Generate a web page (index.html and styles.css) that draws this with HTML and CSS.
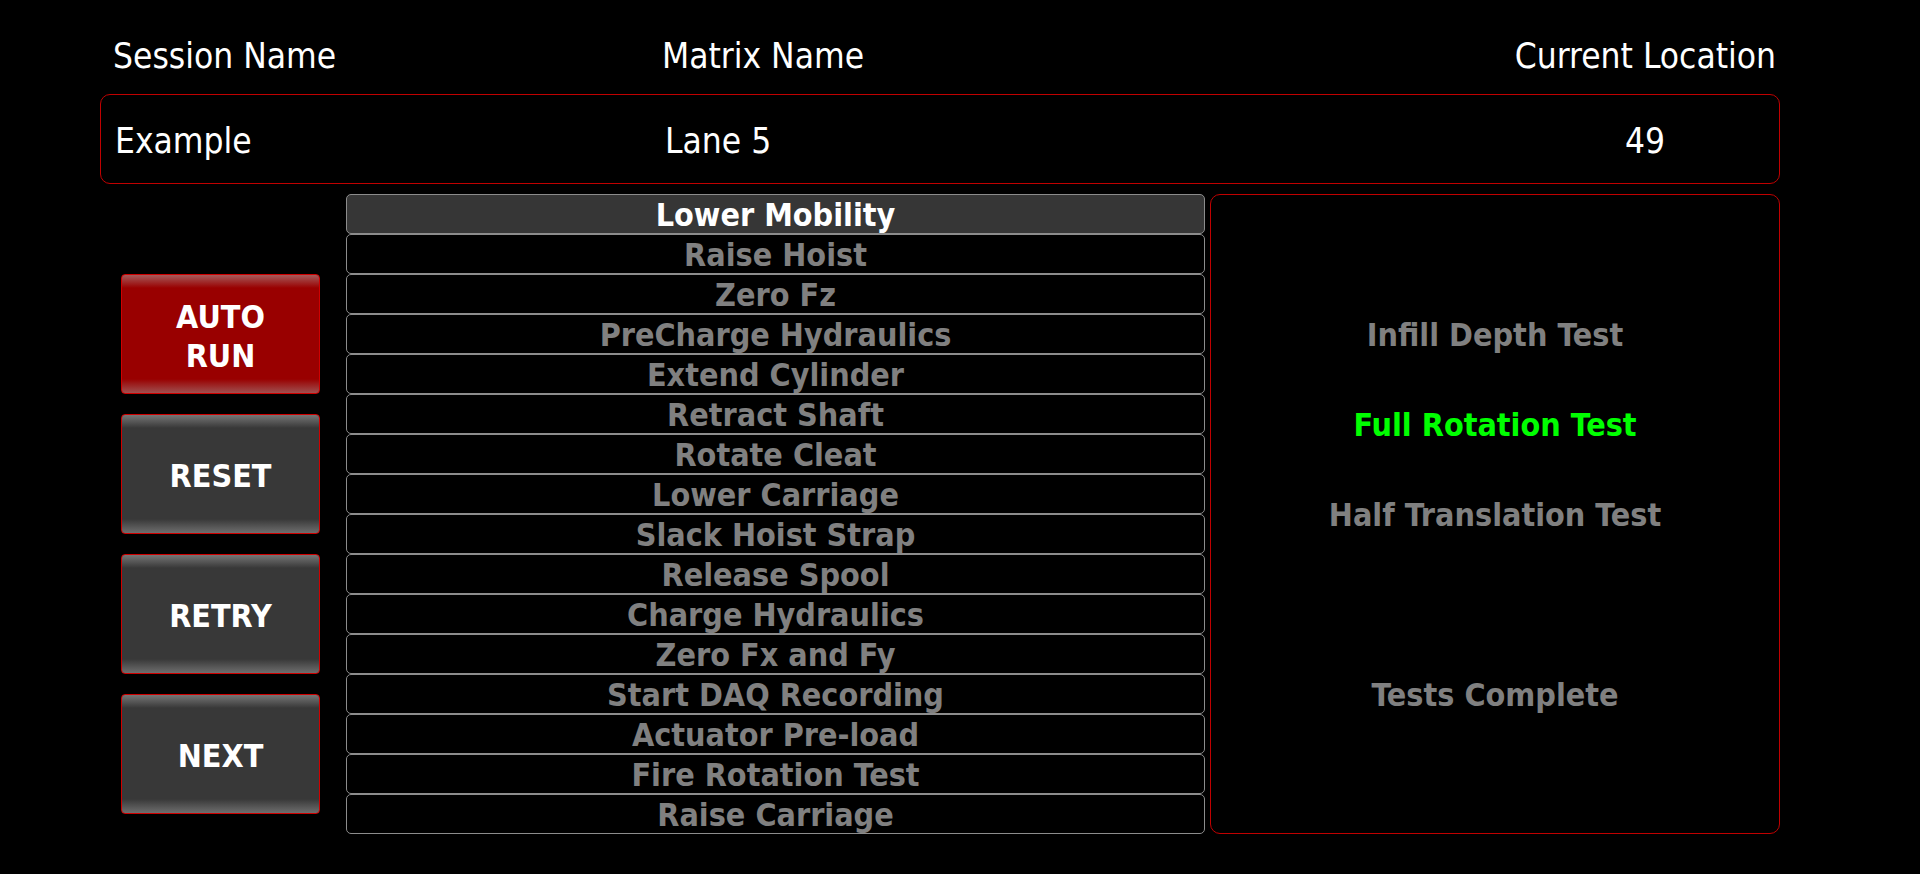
FILE: index.html
```html
<!DOCTYPE html>
<html>
<head>
<meta charset="utf-8">
<title>Test Sequence</title>
<link rel="stylesheet" href="styles.css">
</head>
<body>
<div class="app">
  <div class="head-labels">
    <div class="label">Session Name</div>
    <div class="label">Matrix Name</div>
    <div class="label right">Current Location</div>
  </div>
  <div class="info-box">
    <div class="value">Example</div>
    <div class="value">Lane 5</div>
    <div class="value center">49</div>
  </div>
  <div class="main">
    <div class="buttons">
      <div class="btn btn-red">AUTO<br>RUN</div>
      <div class="btn">RESET</div>
      <div class="btn">RETRY</div>
      <div class="btn">NEXT</div>
    </div>
    <div class="steps">
      <div class="step active">Lower Mobility</div>
      <div class="step">Raise Hoist</div>
      <div class="step">Zero Fz</div>
      <div class="step">PreCharge Hydraulics</div>
      <div class="step">Extend Cylinder</div>
      <div class="step">Retract Shaft</div>
      <div class="step">Rotate Cleat</div>
      <div class="step">Lower Carriage</div>
      <div class="step">Slack Hoist Strap</div>
      <div class="step">Release Spool</div>
      <div class="step">Charge Hydraulics</div>
      <div class="step">Zero Fx and Fy</div>
      <div class="step">Start DAQ Recording</div>
      <div class="step">Actuator Pre-load</div>
      <div class="step">Fire Rotation Test</div>
      <div class="step">Raise Carriage</div>
    </div>
    <div class="panel">
      <div class="slot">Infill Depth Test</div>
      <div class="slot current">Full Rotation Test</div>
      <div class="slot">Half Translation Test</div>
      <div class="slot"></div>
      <div class="slot">Tests Complete</div>
    </div>
  </div>
</div>
</body>
</html>
```
FILE: styles.css
```css
* {
  box-sizing: border-box;
  margin: 0;
  padding: 0;
}

html,
body {
  background: #000;
}

body {
  width: 1920px;
  height: 874px;
  overflow: hidden;
  font-family: "DejaVu Sans Condensed", "DejaVu Sans", sans-serif;
  font-stretch: condensed;
  color: #fff;
}

.app {
  margin-left: 100px;
  width: 1680px;
}

.head-labels {
  height: 94px;
  display: grid;
  grid-template-columns: 549px 1fr 262px;
  padding: 36px 4px 0 13px;
  font-size: 35px;
  line-height: 40px;
}

.right {
  text-align: right;
  white-space: nowrap;
}

.center {
  text-align: center;
}

.info-box {
  height: 90px;
  border: 1px solid #c00000;
  border-radius: 10px;
  display: grid;
  grid-template-columns: 550px 1fr 262px;
  align-items: center;
  padding: 4px 3px 0 14px;
  font-size: 35px;
  line-height: 40px;
}

.main {
  display: flex;
  margin-top: 10px;
  height: 640px;
}

.buttons {
  margin-left: 21px;
  width: 199px;
  display: flex;
  flex-direction: column;
  gap: 20px;
  padding-top: 80px;
}

.btn {
  height: 120px;
  border: 1px solid #d00000;
  border-radius: 4px;
  background: linear-gradient(#767676 0, #383838 13px, #383838 calc(100% - 14px), #6e6e6e 100%);
  display: flex;
  align-items: center;
  justify-content: center;
  padding-top: 5px;
  text-align: center;
  font-weight: bold;
  font-size: 32px;
  line-height: 39px;
  color: #fff;
}

.btn-red {
  background: linear-gradient(#a65a5a 0, #990000 13px, #990000 calc(100% - 14px), #a05050 100%);
}

.steps {
  margin-left: 26px;
  width: 859px;
  display: flex;
  flex-direction: column;
}

.step {
  height: 40px;
  border: 1px solid #8c8c8c;
  border-radius: 5px;
  padding-top: 2px;
  text-align: center;
  font-weight: bold;
  font-size: 32px;
  line-height: 36px;
  color: #808080;
  white-space: nowrap;
}

.step.active {
  background: #363636;
  color: #fff;
}

.panel {
  margin-left: 5px;
  width: 570px;
  border: 1px solid #c00000;
  border-radius: 10px;
  padding-top: 2px;
  display: flex;
  flex-direction: column;
  justify-content: center;
}

.slot {
  height: 90px;
  display: flex;
  align-items: center;
  justify-content: center;
  font-weight: bold;
  font-size: 32px;
  color: #808080;
  white-space: nowrap;
}

.slot.current {
  color: #00ff00;
}
```
